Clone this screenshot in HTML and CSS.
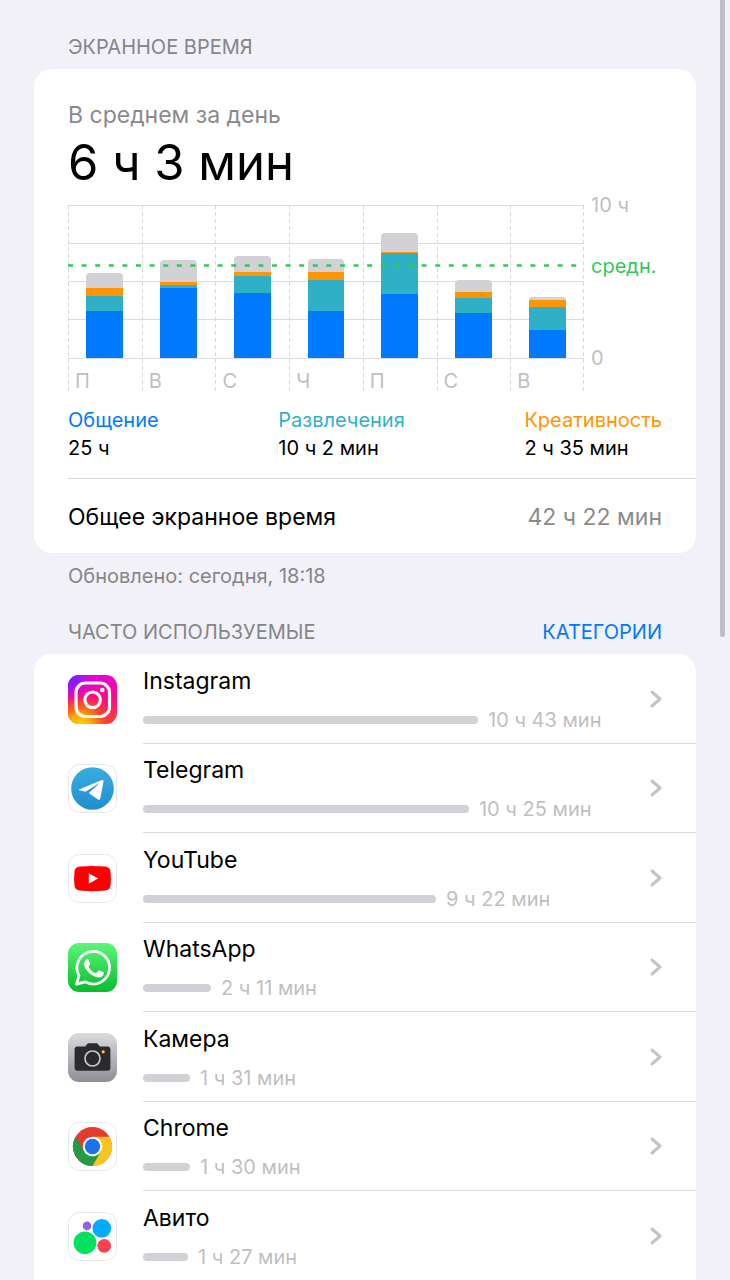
FILE: index.html
```html
<!doctype html>
<html lang="ru">
  <head>
    <meta charset="UTF-8" />
    <meta name="viewport" content="width=device-width, initial-scale=1.0" />
    <title>Экранное время</title>
    <link rel="stylesheet" href="styles.css">
  </head>
  <body>
    <main class="page">
      <div class="section-head">
        <h2>Экранное время</h2>
      </div>
      <section class="card summary">
        <p class="caption">В среднем за день</p>
        <p class="average">6 ч 3 мин</p>

        <div class="chart">
          <div class="plot">
            <div class="day">
              <div class="bar"><i class="other" style="height: 15px"></i><i class="creative" style="height: 8px"></i><i class="fun" style="height: 15px"></i><i class="social" style="height: 47px"></i></div>
              <span>П</span>
            </div>
            <div class="day">
              <div class="bar"><i class="other" style="height: 22px"></i><i class="creative" style="height: 3px"></i><i class="fun" style="height: 3px"></i><i class="social" style="height: 70px"></i></div>
              <span>В</span>
            </div>
            <div class="day">
              <div class="bar"><i class="other" style="height: 16px"></i><i class="creative" style="height: 4px"></i><i class="fun" style="height: 17px"></i><i class="social" style="height: 65px"></i></div>
              <span>С</span>
            </div>
            <div class="day">
              <div class="bar"><i class="other" style="height: 13px"></i><i class="creative" style="height: 8px"></i><i class="fun" style="height: 31px"></i><i class="social" style="height: 47px"></i></div>
              <span>Ч</span>
            </div>
            <div class="day">
              <div class="bar"><i class="other" style="height: 19px"></i><i class="creative" style="height: 1px"></i><i class="fun" style="height: 41px"></i><i class="social" style="height: 64px"></i></div>
              <span>П</span>
            </div>
            <div class="day">
              <div class="bar"><i class="other" style="height: 12px"></i><i class="creative" style="height: 6px"></i><i class="fun" style="height: 15px"></i><i class="social" style="height: 45px"></i></div>
              <span>С</span>
            </div>
            <div class="day">
              <div class="bar"><i class="other" style="height: 3px"></i><i class="creative" style="height: 7px"></i><i class="fun" style="height: 23px"></i><i class="social" style="height: 28px"></i></div>
              <span>В</span>
            </div>
            <svg class="avg-line" height="3" aria-hidden="true"><line x1="0" y1="1.5" x2="99%" y2="1.5" stroke="#34c759" stroke-width="2.6" stroke-dasharray="5 8.6" /></svg>
          </div>
          <div class="scale">
            <span class="max">10 ч</span>
            <span class="avg">средн.</span>
            <span class="min">0</span>
          </div>
        </div>

        <dl class="legend">
          <div><dt class="c-social">Общение</dt><dd>25 ч</dd></div>
          <div><dt class="c-fun">Развлечения</dt><dd>10 ч 2 мин</dd></div>
          <div><dt class="c-creative">Креативность</dt><dd>2 ч 35 мин</dd></div>
        </dl>

        <div class="total">
          <span>Общее экранное время</span>
          <span class="value">42 ч 22 мин</span>
        </div>
      </section>
      <p class="updated">Обновлено: сегодня, 18:18</p>

      <div class="section-head">
        <h2>Часто используемые</h2>
        <button type="button">Категории</button>
      </div>
      <nav class="card apps">
        <a class="app" href="#instagram">
          <svg class="icon" viewBox="0 0 49 49" aria-hidden="true">
            <defs>
              <linearGradient id="ig-base" x1="0" y1="0" x2="0" y2="1">
                <stop offset="0" stop-color="#e800d8" />
                <stop offset=".5" stop-color="#ff0a80" />
                <stop offset="1" stop-color="#ff4a2a" />
              </linearGradient>
              <radialGradient id="ig-warm" cx=".25" cy="1.05" r=".75">
                <stop offset="0" stop-color="#ffd600" />
                <stop offset=".3" stop-color="#ffae00" />
                <stop offset=".65" stop-color="#ff4d20" stop-opacity=".8" />
                <stop offset="1" stop-color="#ff1070" stop-opacity="0" />
              </radialGradient>
              <radialGradient id="ig-cold" cx="0" cy="0" r=".6">
                <stop offset="0" stop-color="#5a20ff" />
                <stop offset=".35" stop-color="#8a1cff" />
                <stop offset="1" stop-color="#e800d8" stop-opacity="0" />
              </radialGradient>
            </defs>
            <rect width="49" height="49" rx="11" fill="url(#ig-base)" />
            <rect width="49" height="49" rx="11" fill="url(#ig-warm)" />
            <rect width="49" height="49" rx="11" fill="url(#ig-cold)" />
            <rect x="8" y="8" width="33.500" height="33.500" rx="9.500" fill="none" stroke="#fff" stroke-width="3.200" />
            <circle cx="24.600" cy="24.800" r="7.800" fill="none" stroke="#fff" stroke-width="3.200" />
            <circle cx="34.300" cy="15" r="2.300" fill="#fff" />
          </svg>
          <div class="info">
            <div class="text">
              <span class="name">Instagram</span>
              <span class="usage"><i style="width: 67%"></i>10 ч 43 мин</span>
            </div>
            <svg class="chevron" viewBox="0 0 12 18" aria-hidden="true"><path d="M2 2l8 7-8 7" /></svg>
          </div>
        </a>
        <a class="app" href="#telegram">
          <svg class="icon" viewBox="0 0 49 49" aria-hidden="true">
            <defs>
              <linearGradient id="tg" x1="0" y1="0" x2="0" y2="1">
                <stop offset="0" stop-color="#39aee2" />
                <stop offset="1" stop-color="#1f8ece" />
              </linearGradient>
            </defs>
            <rect class="tile" x=".5" y=".5" width="48" height="48" rx="11" />
            <circle cx="24.500" cy="24.500" r="21.300" fill="url(#tg)" />
            <path d="M11.500 25.200L34 16.100c1-.4 1.700.1 1.500 1.400l-3.200 17c-.3 1.400-1.200 1.700-2.300 1l-8.300-5.700c-.7-.5-.6-1.100-.1-1.600l8.700-7.800c.5-.5.1-.8-.5-.4l-11.500 7.300c-.6.4-1.200.4-1.800.2l-4.900-1.200c-1.100-.3-1-.8-.1-1.100z" fill="#fff" />
          </svg>
          <div class="info">
            <div class="text">
              <span class="name">Telegram</span>
              <span class="usage"><i style="width: 65.2%"></i>10 ч 25 мин</span>
            </div>
            <svg class="chevron" viewBox="0 0 12 18" aria-hidden="true"><path d="M2 2l8 7-8 7" /></svg>
          </div>
        </a>
        <a class="app" href="#youtube">
          <svg class="icon" viewBox="0 0 49 49" aria-hidden="true">
            <rect class="tile" x=".5" y=".5" width="48" height="48" rx="11" />
            <path d="M12 12.600q12.500-1.200 25 0 5 .5 5.500 5 .8 7 0 14-.5 4.500-5.500 5-12.500 1.200-25 0-5-.5-5.500-5-.8-7 0-14 .5-4.500 5.500-5z" fill="#f00" />
            <path d="M20.800 19.200v10.600l9.200-5.300z" fill="#fff" />
          </svg>
          <div class="info">
            <div class="text">
              <span class="name">YouTube</span>
              <span class="usage"><i style="width: 58.6%"></i>9 ч 22 мин</span>
            </div>
            <svg class="chevron" viewBox="0 0 12 18" aria-hidden="true"><path d="M2 2l8 7-8 7" /></svg>
          </div>
        </a>
        <a class="app" href="#whatsapp">
          <svg class="icon" viewBox="0 0 49 49" aria-hidden="true">
            <defs>
              <linearGradient id="wa" x1="0" y1="0" x2="0" y2="1">
                <stop offset="0" stop-color="#5cf777" />
                <stop offset="1" stop-color="#07bc2c" />
              </linearGradient>
            </defs>
            <rect width="49" height="49" rx="11" fill="url(#wa)" />
            <path d="M8.600 41.200l2.400-8.700a16.300 16.300 0 1 1 6.200 6.300z" fill="none" stroke="#fff" stroke-width="2.800" stroke-linejoin="round" />
            <path d="M18.200 16.400c.8-.8 1.900-.7 2.400.4l1.500 3.500c.3.700.1 1.100-1.300 2.900-.3.400-.3.800 0 1.200 1.600 2.700 3.800 4.500 6.600 5.600.5.200.9.100 1.200-.3l1.600-2c.4-.5.800-.5 1.300-.3l3.600 1.700c.6.300.8.600.7 1.300-.4 2.900-3 4.300-5.500 4-6.500-1.100-11.200-5.300-13.700-10.700-1.100-2.600-.6-5.600 1.600-7.300z" fill="#fff" />
          </svg>
          <div class="info">
            <div class="text">
              <span class="name">WhatsApp</span>
              <span class="usage"><i style="width: 13.6%"></i>2 ч 11 мин</span>
            </div>
            <svg class="chevron" viewBox="0 0 12 18" aria-hidden="true"><path d="M2 2l8 7-8 7" /></svg>
          </div>
        </a>
        <a class="app" href="#camera">
          <svg class="icon" viewBox="0 0 49 49" aria-hidden="true">
            <defs>
              <linearGradient id="cam" x1="0" y1="0" x2="0" y2="1">
                <stop offset="0" stop-color="#dcdbe0" />
                <stop offset="1" stop-color="#8f8e94" />
              </linearGradient>
            </defs>
            <rect width="49" height="49" rx="11" fill="url(#cam)" />
            <path d="M9.500 13.500h6.700c1 0 1.500-.4 2-1.200.8-1.500 1.500-2.100 3-2.100h6.600c1.500 0 2.200.6 3 2.100.5.800 1 1.200 2 1.200h6.700c1.900 0 2.900 1 2.900 2.900v18.400c0 1.900-1 2.900-2.900 2.900h-30c-1.900 0-2.900-1-2.900-2.900V16.400c0-1.900 1-2.900 2.900-2.900z" fill="#2b2b2d" />
            <circle cx="24.500" cy="25.500" r="7.500" fill="#29292b" stroke="#c8c7cb" stroke-width="1.700" />
            <circle cx="35.200" cy="18.800" r="1.600" fill="#ffd60a" />
          </svg>
          <div class="info">
            <div class="text">
              <span class="name">Камера</span>
              <span class="usage"><i style="width: 9.4%"></i>1 ч 31 мин</span>
            </div>
            <svg class="chevron" viewBox="0 0 12 18" aria-hidden="true"><path d="M2 2l8 7-8 7" /></svg>
          </div>
        </a>
        <a class="app" href="#chrome">
          <svg class="icon" viewBox="0 0 49 49" aria-hidden="true">
            <rect class="tile" x=".5" y=".5" width="48" height="48" rx="11" />
            <circle cx="24.500" cy="24.500" r="19.500" fill="#e33b2e" />
            <path d="M7.600 14.750A19.500 19.500 0 0 0 24.500 44l8.500-14.600-17-.1z" fill="#259a43" />
            <path d="M24.500 44a19.500 19.500 0 0 0 16.900-29.250H24.500l8.440 14.600z" fill="#fcc31e" />
            <circle cx="24.500" cy="24.500" r="9.750" fill="#fff" />
            <circle cx="24.500" cy="24.500" r="7.700" fill="#1a73e8" />
          </svg>
          <div class="info">
            <div class="text">
              <span class="name">Chrome</span>
              <span class="usage"><i style="width: 9.4%"></i>1 ч 30 мин</span>
            </div>
            <svg class="chevron" viewBox="0 0 12 18" aria-hidden="true"><path d="M2 2l8 7-8 7" /></svg>
          </div>
        </a>
        <a class="app" href="#avito">
          <svg class="icon" viewBox="0 0 49 49" aria-hidden="true">
            <rect class="tile" x=".5" y=".5" width="48" height="48" rx="11" />
            <circle cx="17" cy="30.800" r="11.400" fill="#04e061" />
            <circle cx="33.800" cy="16.400" r="9.300" fill="#00aaff" />
            <circle cx="36.200" cy="33.800" r="6.900" fill="#ff4053" />
            <circle cx="19" cy="13.900" r="4.300" fill="#965eeb" />
          </svg>
          <div class="info">
            <div class="text">
              <span class="name">Авито</span>
              <span class="usage"><i style="width: 9%"></i>1 ч 27 мин</span>
            </div>
            <svg class="chevron" viewBox="0 0 12 18" aria-hidden="true"><path d="M2 2l8 7-8 7" /></svg>
          </div>
        </a>
      </nav>
    </main>
    <div class="scroll-thumb"></div>
  </body>
</html>
```
FILE: styles.css
```css
* {
    box-sizing: border-box;
}

body {
    margin: 0;
    height: 100vh;
    overflow: hidden;
    background-color: #f2f1f7;
    color: #000;
    font-family: Inter, "Noto Sans", sans-serif;
    font-size: 20px;
    line-height: 24px;
}

h2, p, dl, dd {
    margin: 0;
}

.page {
    padding: 35px 34px 0;
}

.section-head {
    display: flex;
    justify-content: space-between;
    padding: 0 34px;
    margin-bottom: 10px;
}

.section-head h2 {
    font-size: 20px;
    font-weight: 400;
    color: #85858a;
    text-transform: uppercase;
}

.section-head button {
    padding: 0;
    border: none;
    background: none;
    font: inherit;
    color: #007aff;
    text-transform: uppercase;
    cursor: pointer;
}

.card {
    background-color: #fff;
    border-radius: 18px;
}

/* summary card */
.summary {
    padding: 32px 0 0 34px;
}

.caption {
    font-size: 23px;
    line-height: 28px;
    color: #8a8a8e;
}

.average {
    margin: 4px 0 12px;
    font-size: 49px;
    line-height: 60px;
}

.chart {
    display: flex;
    padding-right: 34px;
}

.plot {
    position: relative;
    flex: 1;
    display: grid;
    grid-template-columns: repeat(7, 1fr);
    height: 187px;
    /* vertical dashes at the right edge, then the five hour lines */
    background:
        repeating-linear-gradient(#d9d9dd 0 4px, transparent 4px 7px) right top / 1px 100% no-repeat,
        linear-gradient(#dcdcdf, #dcdcdf) 0 0 / 100% 1px no-repeat,
        linear-gradient(#dcdcdf, #dcdcdf) 0 38px / 100% 1px no-repeat,
        linear-gradient(#dcdcdf, #dcdcdf) 0 76px / 100% 1px no-repeat,
        linear-gradient(#dcdcdf, #dcdcdf) 0 114px / 100% 1px no-repeat,
        linear-gradient(#dcdcdf, #dcdcdf) 0 153px / 100% 1px no-repeat;
}

.day {
    display: flex;
    flex-direction: column;
    background: repeating-linear-gradient(#d9d9dd 0 4px, transparent 4px 7px) left top / 1px 100% no-repeat;
}

.day span {
    padding: 11px 0 0 7px;
    color: #bfbfc2;
}

.bar {
    display: flex;
    flex-direction: column;
    justify-content: flex-end;
    align-self: center;
    width: 50%;
    height: 153px;
}

.bar i:first-child {
    border-radius: 4px 4px 0 0;
}

.social { background-color: #007aff; }
.fun { background-color: #30b0c7; }
.creative { background-color: #ff9500; }
.other { background-color: #d1d1d6; }

.avg-line {
    position: absolute;
    top: 59px;
    left: 0;
    width: 100%;
}

.scale {
    display: flex;
    flex-direction: column;
    width: 78px;
    height: 177px;
    margin-top: -12px;
    padding-left: 7px;
    color: #bfbfc2;
}

.scale .avg {
    margin-top: 37px;
    color: #34c759;
}

.scale .min {
    margin-top: auto;
}

.legend {
    display: flex;
    justify-content: space-between;
    padding: 14px 34px 16px 0;
    line-height: 28px;
    border-bottom: 1px solid #d5d5d8;
}

.c-social { color: #007aff; }
.c-fun { color: #30b0c7; }
.c-creative { color: #ff9500; }

.total {
    display: flex;
    justify-content: space-between;
    align-items: center;
    height: 74px;
    padding: 2px 34px 0 0;
    font-size: 23px;
}

.total .value {
    color: #8a8a8e;
}

.updated {
    padding: 11px 34px 32px;
    color: #85858a;
}

/* app list, runs past the bottom of the window */
.apps {
    border-radius: 18px 18px 0 0;
}

.app {
    display: flex;
    align-items: center;
    gap: 26px;
    height: 90px;
    padding-left: 34px;
    color: inherit;
    text-decoration: none;
}

.app:nth-child(even) {
    height: 89px;
}

.icon {
    flex-shrink: 0;
    width: 49px;
    height: 49px;
}

.tile {
    fill: #fff;
    stroke: #e9e9ec;
}

.info {
    flex: 1;
    display: flex;
    align-items: center;
    gap: 7px;
    height: 100%;
    padding-right: 34px;
    border-bottom: 1px solid #dcdcdf;
}

.app:last-child .info {
    border-bottom-color: transparent;
}

.text {
    flex: 1;
    display: flex;
    flex-direction: column;
    gap: 13px;
    padding-top: 1px;
}

.name {
    font-size: 23px;
    line-height: 28px;
}

.usage {
    display: flex;
    align-items: center;
    gap: 10px;
    color: #bfbfc2;
    white-space: nowrap;
}

.usage i {
    height: 8px;
    border-radius: 4px;
    background-color: #d1d1d6;
}

.chevron {
    width: 12px;
    height: 18px;
    fill: none;
    stroke: #c4c4c7;
    stroke-width: 3;
    stroke-linecap: round;
    stroke-linejoin: round;
}

.scroll-thumb {
    position: fixed;
    top: 0;
    right: 5px;
    width: 5px;
    height: 637px;
    border-radius: 0 0 3px 3px;
    background-color: #bfbec5;
}
```
